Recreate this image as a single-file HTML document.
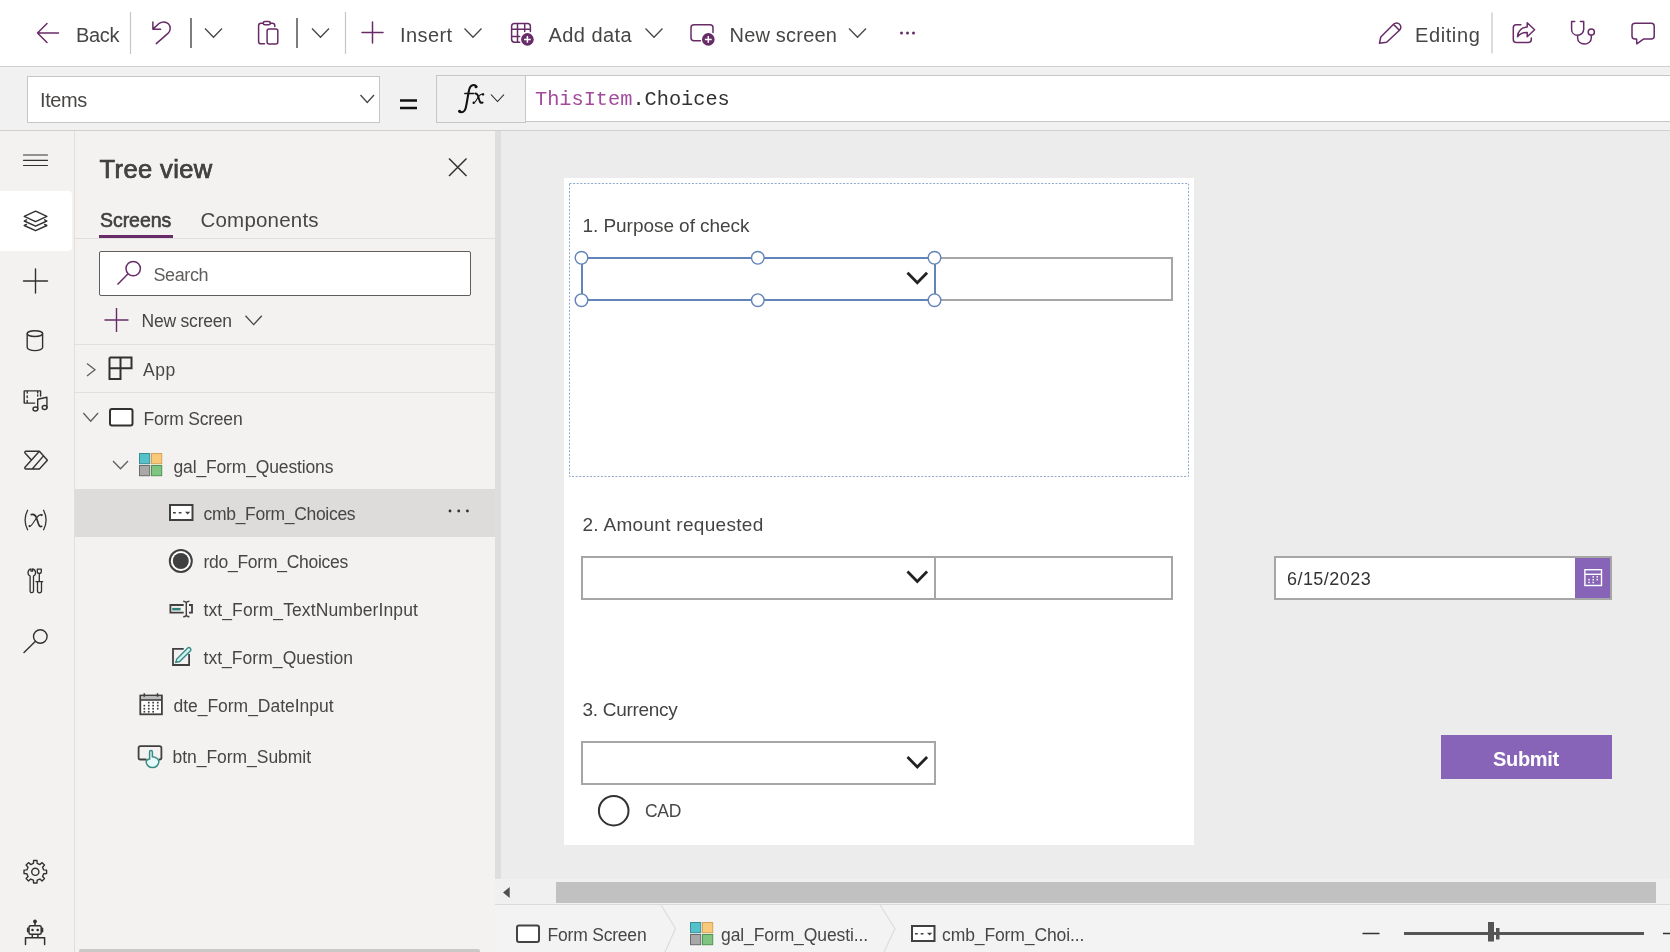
<!DOCTYPE html>
<html><head><meta charset="utf-8">
<style>
*{box-sizing:border-box;margin:0;padding:0}
html,body{width:1670px;height:952px;overflow:hidden;background:#fff;font-family:"Liberation Sans",sans-serif;color:#323130}
.a{position:absolute}
svg.full{position:absolute;left:0;top:0;will-change:transform}
text{white-space:pre}
</style></head><body>
<div class="a" style="left:0px;top:0px;width:1670px;height:66px;background:#fff"></div>
<div class="a" style="left:0px;top:66px;width:1670px;height:1px;background:#d2d0ce"></div>
<div class="a" style="left:0px;top:67px;width:1670px;height:63px;background:#f1f1f1"></div>
<div class="a" style="left:0px;top:130px;width:1670px;height:1px;background:#d2d0ce"></div>
<div class="a" style="left:0px;top:131px;width:74px;height:821px;background:#f3f2f1"></div>
<div class="a" style="left:74px;top:131px;width:1px;height:821px;background:#e1dfdd"></div>
<div class="a" style="left:75px;top:131px;width:420px;height:821px;background:#f3f2f1"></div>
<div class="a" style="left:495px;top:131px;width:6px;height:749px;background:#dedede"></div>
<div class="a" style="left:501px;top:131px;width:1169px;height:748px;background:#ececec"></div>
<div class="a" style="left:564px;top:178px;width:630px;height:667px;background:#fff"></div>
<div class="a" style="left:495px;top:879px;width:1175px;height:25px;background:#f0f0f0"></div>
<div class="a" style="left:495px;top:904px;width:1175px;height:1px;background:#dadada"></div>
<div class="a" style="left:495px;top:905px;width:1175px;height:47px;background:#f3f3f3"></div>
<div class="a" style="left:27px;top:76px;width:353px;height:47px;background:#fff;border:1px solid #c8c6c4"></div>
<div class="a" style="left:436px;top:75px;width:90px;height:48px;background:#f1f1f1;border:1px solid #c8c6c4"></div>
<div class="a" style="left:525px;top:75px;width:1145px;height:47px;background:#fff;border:1px solid #c8c6c4;border-right:none"></div>
<div class="a" style="left:0px;top:191px;width:72px;height:60px;background:#fff;border-radius:0 4px 4px 0"></div>
<div class="a" style="left:99px;top:251px;width:372px;height:45px;background:#fff;border:1px solid #605e5c;border-radius:2px"></div>
<div class="a" style="left:99px;top:235px;width:74px;height:3px;background:#672b67"></div>
<div class="a" style="left:75px;top:238px;width:420px;height:1px;background:#e1dfdd"></div>
<div class="a" style="left:75px;top:344px;width:420px;height:1px;background:#e1dfdd"></div>
<div class="a" style="left:75px;top:392px;width:420px;height:1px;background:#e1dfdd"></div>
<div class="a" style="left:75px;top:489px;width:420px;height:48px;background:#dddcdb"></div>
<div class="a" style="left:79px;top:949px;width:401px;height:3px;background:#c8c8c8;border-radius:2px 2px 0 0"></div>
<div class="a" style="left:581px;top:257px;width:355px;height:44px;background:#fff;border:2px solid #6284b8"></div>
<div class="a" style="left:936px;top:257px;width:237px;height:44px;background:#fff;border:2px solid #a6a6a6;border-left:none"></div>
<div class="a" style="left:581px;top:556px;width:355px;height:44px;background:#fff;border:2px solid #a6a6a6"></div>
<div class="a" style="left:934px;top:556px;width:239px;height:44px;background:#fff;border:2px solid #a6a6a6"></div>
<div class="a" style="left:581px;top:741px;width:355px;height:44px;background:#fff;border:2px solid #a6a6a6"></div>
<div class="a" style="left:1274px;top:556px;width:338px;height:44px;background:#fff;border:2px solid #a6a6a6"></div>
<div class="a" style="left:1575px;top:558px;width:35px;height:40px;background:#8764b8"></div>
<div class="a" style="left:1441px;top:735px;width:171px;height:44px;background:#8764b8"></div>
<div class="a" style="left:556px;top:882px;width:1100px;height:21px;background:#c1c1c1"></div>
<svg class="full" width="1670" height="952" viewBox="0 0 1670 952">
<g stroke="#672b67" stroke-width="1.5" fill="none" stroke-linecap="round" stroke-linejoin="round">
<path d="M58.5 33H37.5M47 23.5L37.5 33l9.5 9.5"/>
<path d="M152.9 22v7.2h7.7M153.2 28.9L159.3 23.3C160.6 22.3 162 21.9 163.6 21.9C167.5 21.9 170.2 24.8 170.2 28.4C170.2 30.4 169.5 31.9 168.2 33.1L156.3 43.6"/>
<path d="M264.5 43.8H261C259.6 43.8 258.6 42.8 258.6 41.4V25.7C258.6 24.3 259.6 23.3 261 23.3H263.3M270.3 23.3H272.4C273.8 23.3 274.8 24.3 274.8 25.7V26.5"/>
<rect x="263.3" y="21.6" width="7" height="3.2" rx="1.5"/>
<rect x="267.1" y="28.9" width="10.7" height="15" rx="2"/>
<path d="M372.5 22v21M362 32.5h21"/>
<path d="M519.7 42.2H514.5C512.8 42.2 511.6 41 511.6 39.3V26.4C511.6 24.7 512.8 23.5 514.5 23.5H527.5C529.2 23.5 530.4 24.7 530.4 26.4V31.5M511.6 29.3H530.4M511.6 36.5H519.7M517.5 23.5V42.2M524.7 23.5V31.5"/>
<path d="M700.4 40.7H694C692.3 40.7 691 39.4 691 37.7V27.7C691 26 692.3 24.7 694 24.7H710C711.7 24.7 713 26 713 27.7V32.6"/>
<path d="M1379.5 43.2L1380.8 37L1393.5 24.3C1395.3 22.5 1398 22.5 1399.6 24.2C1401.3 25.9 1401.2 28.5 1399.5 30.2L1386.6 42.3ZM1393.5 24.4L1398.6 29.5"/>
<path d="M1520.8 24.7H1516.3C1514.6 24.7 1513.3 26 1513.3 27.7V39.4C1513.3 41.1 1514.6 42.4 1516.3 42.4H1528.3C1530 42.4 1531.3 41.1 1531.3 39.4V38"/>
<path d="M1517.5 36.7C1518 31 1521 27.3 1527.2 27.1V22.7L1534.6 29.7L1527.2 36.7V32.5C1523 32.3 1520 33.8 1517.5 36.7Z"/>
<path d="M1574.7 21.4H1571.6V29.2C1571.6 32.7 1574.2 35.2 1577.6 35.2C1581 35.2 1583.7 32.7 1583.7 29.2V21.4H1580.4M1577.6 35.2V37.8C1577.6 41.5 1580.5 44 1584.4 44C1588.3 44 1591.3 41.5 1591.3 37.8V35.2"/>
<circle cx="1591.3" cy="32.1" r="3.1"/>
<path d="M1636.6 38.9H1635C1633.3 38.9 1632 37.6 1632 35.9V26.3C1632 24.6 1633.3 23.3 1635 23.3H1651.2C1652.9 23.3 1654.2 24.6 1654.2 26.3V35.9C1654.2 37.6 1652.9 38.9 1651.2 38.9H1643.8L1636.8 43.8Z"/>
</g>
<circle cx="527.4" cy="39.4" r="6.3" fill="#672b67"/><path d="M527.4 36v6.8M524 39.4h6.8" stroke="#fff" stroke-width="1.5"/>
<circle cx="708.3" cy="39.4" r="6.3" fill="#672b67"/><path d="M708.3 36v6.8M704.9 39.4h6.8" stroke="#fff" stroke-width="1.5"/>
<circle cx="901.5" cy="33" r="1.5" fill="#672b67"/>
<circle cx="907.5" cy="33" r="1.5" fill="#672b67"/>
<circle cx="913.5" cy="33" r="1.5" fill="#672b67"/>
<path d="M130.5 12V54M345.5 12V54M1492 12.5V53.5" stroke="#c8c6c4" stroke-width="1.2"/>
<path d="M191 18V48M297 18V48" stroke="#605e5c" stroke-width="1.6"/>
<path d="M205 28.5L213.5 37.3L222 28.5" stroke="#484644" stroke-width="1.3" fill="none"/>
<path d="M312 28.5L320.5 37.3L329 28.5" stroke="#484644" stroke-width="1.3" fill="none"/>
<path d="M464.5 28.5L473.0 37.3L481.5 28.5" stroke="#484644" stroke-width="1.3" fill="none"/>
<path d="M645.5 28.5L654.0 37.3L662.5 28.5" stroke="#484644" stroke-width="1.3" fill="none"/>
<path d="M849 28.5L857.5 37.3L866 28.5" stroke="#484644" stroke-width="1.3" fill="none"/>
<text x="76" y="42" font-size="20" fill="#474645" font-weight="400" font-family="Liberation Sans" letter-spacing="-0.3" >Back</text>
<text x="400" y="42" font-size="20" fill="#474645" font-weight="400" font-family="Liberation Sans" letter-spacing="0.4" >Insert</text>
<text x="548.5" y="42" font-size="20" fill="#474645" font-weight="400" font-family="Liberation Sans" letter-spacing="0.45" >Add data</text>
<text x="729.5" y="42" font-size="20" fill="#474645" font-weight="400" font-family="Liberation Sans" letter-spacing="0.2" >New screen</text>
<text x="1415" y="42" font-size="20" fill="#474645" font-weight="400" font-family="Liberation Sans" letter-spacing="0.6" >Editing</text>
<text x="40" y="107" font-size="20" fill="#484644" font-weight="400" font-family="Liberation Sans" letter-spacing="-0.4" >Items</text>
<path d="M360.5 95L367.25 102.5L374.0 95" stroke="#484644" stroke-width="1.3" fill="none"/>
<path d="M400 100.5h17M400 108h17" stroke="#111" stroke-width="2.4"/>
<g fill="none" stroke="#111" stroke-linecap="round"><path d="M476.3 86.7C475.6 85.3 474 84.8 472.6 85.2C470.4 85.8 469.3 88 468.8 91.2L466.4 104.8C465.7 109.4 463.9 112.3 461.4 112.3C460.3 112.3 459.6 111.9 459.3 111.3" stroke-width="2.1"/><path d="M464.8 93.6H473.6" stroke-width="1.5"/><path d="M475.4 93.5C476.8 93.5 477.6 94.5 478.2 96.5L479.8 101.5C480.3 102.6 481.2 103.2 482.6 102.6" stroke-width="1.9"/><path d="M483.2 94.1C481.5 93.5 480 94.5 478.3 97L475.5 101.5C474.8 102.6 474.1 103.1 473.4 103" stroke-width="1.1"/></g><circle cx="476" cy="86.8" r="1.5" fill="#111"/><circle cx="459.7" cy="111.2" r="1.5" fill="#111"/><circle cx="483" cy="94.4" r="1.2" fill="#111"/><circle cx="473.7" cy="102.8" r="1.2" fill="#111"/>
<path d="M491 94.5L497.5 101.5L504 94.5" stroke="#222" stroke-width="1.1" fill="none"/>
<text x="535" y="105" font-size="20.3" font-family="Liberation Mono"><tspan fill="#a24a9c">ThisItem</tspan><tspan fill="#323130">.Choices</tspan></text>
<g stroke="#323130" stroke-width="1.4" fill="none" stroke-linecap="round" stroke-linejoin="round">
<path d="M23.5 155h24M23.5 160.3h24M23.5 165.5h24" stroke-width="1.2"/>
<path d="M35.6 211.1L46.9 216.4L35.6 221.6L24.2 216.4Z"/>
<path d="M26.5 219.8L24.2 221L35.6 226.2L46.9 221L44.6 219.8M26.5 224.4L24.2 225.5L35.6 230.7L46.9 225.5L44.6 224.4"/>
<path d="M35.5 269v24M23.5 281h24"/>
<ellipse cx="34.9" cy="333.6" rx="7.7" ry="2.9"/><path d="M27.2 333.6V347.5C27.2 349.2 30.6 350.6 34.9 350.6C39.2 350.6 42.6 349.2 42.6 347.5V333.6"/>
<path d="M40.6 396V390.9H24.2V403.1H34.7M27.2 391.5v1.5M27.2 396v1.5M27.2 400.5v1.5M37.7 391.5v1.5M37.7 395v1"/>
<path d="M37.7 409V399.3L46.9 397.2V407.7"/><ellipse cx="35.4" cy="409" rx="2.4" ry="2"/><ellipse cx="44.6" cy="407.5" rx="2.4" ry="2"/>
<path d="M25.9 451.3H39.4L47.4 460.2L39.4 469H25.9C25 469 24.4 468 25 467.3L39.4 451.3M25.9 451.3C25 451.3 24.5 452.3 25 453L31.4 460M32.2 469L42.9 456.6"/>
<path d="M30.1 576V591A1.7 1.7 0 0 0 33.5 591V576A3.8 3.8 0 0 0 32.6 568.9V571.2H31V568.9A3.8 3.8 0 0 0 30.1 576Z" stroke-width="1.3"/>
<path d="M37.3 569.2H41.3V571.5C41.3 572.8 40.4 573.5 39.3 573.5C38.2 573.5 37.3 572.8 37.3 571.5ZM39.3 573.5V581.6M36 581.6H42.7M37.5 581.6V591C37.5 592 38.3 592.8 39.5 592.8C40.7 592.8 41.5 592 41.5 591V581.6" stroke-width="1.3"/>
<circle cx="40.3" cy="636.5" r="6.8"/><path d="M35.5 641.3L24 652.5"/>
<path d="M43.69 869.92 L46.57 870.10 L46.57 873.50 L43.69 873.68 L42.56 876.41 L44.48 878.57 L42.07 880.98 L39.91 879.06 L37.18 880.19 L37.00 883.07 L33.60 883.07 L33.42 880.19 L30.69 879.06 L28.53 880.98 L26.12 878.57 L28.04 876.41 L26.91 873.68 L24.03 873.50 L24.03 870.10 L26.91 869.92 L28.04 867.19 L26.12 865.03 L28.53 862.62 L30.69 864.54 L33.42 863.41 L33.60 860.53 L37.00 860.53 L37.18 863.41 L39.91 864.54 L42.07 862.62 L44.48 865.03 L42.56 867.19Z" stroke-width="1.4"/>
<circle cx="35.3" cy="871.8" r="3.6"/>
<path d="M35 921.8V925.5M30.5 925.8H39.7C40.5 925.8 41.2 926.5 41.2 927.3V932.8C41.2 933.6 40.5 934.3 39.7 934.3H30.5C29.7 934.3 29 933.6 29 932.8V927.3C29 926.5 29.7 925.8 30.5 925.8ZM32.3 934.3V937.5M37.9 934.3V937.5M25.5 944.5V937.7H44.6V944.5" stroke-width="1.5"/>
<circle cx="35" cy="921.5" r="1.2" fill="#323130"/><path d="M27.8 928.5v3M42.4 928.5v3" stroke-width="1.8"/>
<circle cx="32.5" cy="930" r=".6" fill="#323130"/><circle cx="37.7" cy="930" r=".6" fill="#323130"/>
</g>
<g fill="none" stroke="#323130" stroke-linecap="round"><path d="M27.6 510.3Q22.6 520 27.6 529.7M43.6 510.3Q48.6 520 43.6 529.7" stroke-width="1.3"/><path d="M31.3 514.6C33.5 514 35.3 514.6 36.3 517.5L38.6 524.2C39.3 526.2 40.3 527.1 41.7 526.3" stroke-width="1.7"/><path d="M41.8 514.8C40.2 514.1 38.6 515 36.8 517.6L32.6 523.8C31.3 525.8 30.4 526.7 29.4 526.4" stroke-width="1.1"/></g><circle cx="41.6" cy="515.1" r="1.1" fill="#323130"/><circle cx="29.6" cy="526.1" r="1.1" fill="#323130"/>
<text x="99.5" y="178" font-size="25.5" fill="#474645" font-weight="400" font-family="Liberation Sans" letter-spacing="0.4" stroke="#323130" stroke-width="0.7">Tree view</text>
<path d="M449 158.5l17.5 17.5M466.5 158.5L449 176" stroke="#323130" stroke-width="1.5"/>
<text x="100" y="227" font-size="19.5" fill="#474645" font-weight="400" font-family="Liberation Sans" letter-spacing="-0.05" stroke="#323130" stroke-width="0.55">Screens</text>
<text x="200.5" y="227" font-size="20.5" fill="#474645" font-weight="400" font-family="Liberation Sans" letter-spacing="0.2" >Components</text>
<g stroke="#672b67" stroke-width="1.5" fill="none"><circle cx="133.2" cy="268.6" r="7.2"/><path d="M128.1 273.7L117.5 284.5"/></g>
<text x="153.5" y="280.5" font-size="18" fill="#605e5c" font-weight="400" font-family="Liberation Sans" letter-spacing="-0.4" >Search</text>
<path d="M116.5 308v24M104.5 320h24" stroke="#672b67" stroke-width="1.4"/>
<text x="141.5" y="327" font-size="17.5" fill="#474645" font-weight="400" font-family="Liberation Sans" letter-spacing="-0.2" >New screen</text>
<path d="M245.5 315.8L253.65 324.6L261.8 315.8" stroke="#484644" stroke-width="1.3" fill="none"/>
<path d="M87 363.5L95 369.8L87 376" stroke="#605e5c" stroke-width="1.3" fill="none"/>
<path d="M83.3 413L90.7 421.3L98.1 413" stroke="#605e5c" stroke-width="1.3" fill="none"/>
<path d="M113 461L120.5 468.8L128 461" stroke="#605e5c" stroke-width="1.3" fill="none"/>
<g stroke="#323130" stroke-width="2" fill="none"><path d="M109.5 357.5H131.5V368.2H120.5M109.5 357.5V379H120.5V357.5M109.5 368.2H120.5"/></g>
<text x="143" y="376" font-size="17.5" fill="#474645" font-weight="400" font-family="Liberation Sans" letter-spacing="0.6" >App</text>
<rect x="110" y="409" width="22.5" height="16.5" rx="2" fill="#fff" stroke="#323130" stroke-width="2"/>
<text x="143.5" y="424.5" font-size="17.5" fill="#474645" font-weight="400" font-family="Liberation Sans" letter-spacing="-0.2" >Form Screen</text>
<rect x="139.5" y="453.5" width="10.2" height="10.2" fill="#55c1cb" stroke="#3c8c93" stroke-width="1"/>
<rect x="151.5" y="453.5" width="10.2" height="10.2" fill="#f9c97b" stroke="#d7a257" stroke-width="1"/>
<rect x="139.5" y="465.5" width="10.2" height="10.2" fill="#a8a8a8" stroke="#6b6b6b" stroke-width="1"/>
<rect x="151.5" y="465.5" width="10.2" height="10.2" fill="#80c482" stroke="#4f9652" stroke-width="1"/>
<text x="173.5" y="472.5" font-size="17.5" fill="#474645" font-weight="400" font-family="Liberation Sans" letter-spacing="-0.15" >gal_Form_Questions</text>
<rect x="170" y="505" width="22.5" height="15" fill="#fff" stroke="#404040" stroke-width="2"/>
<path d="M173 512.7h2.8M178.7 512.7h2.8" stroke="#404040" stroke-width="1.6"/>
<path d="M185 511.8h5.3l-2.65 2.7z" fill="#404040"/>
<text x="203.5" y="519.5" font-size="17.5" fill="#474645" font-weight="400" font-family="Liberation Sans" letter-spacing="-0.3" >cmb_Form_Choices</text>
<circle cx="450" cy="511" r="1.4" fill="#323130"/>
<circle cx="458.7" cy="511" r="1.4" fill="#323130"/>
<circle cx="467.4" cy="511" r="1.4" fill="#323130"/>
<circle cx="180.8" cy="561" r="11" fill="#fff" stroke="#404040" stroke-width="2"/><circle cx="180.8" cy="561" r="8" fill="#404040"/>
<text x="203.5" y="568" font-size="17.5" fill="#474645" font-weight="400" font-family="Liberation Sans" letter-spacing="-0.27" >rdo_Form_Choices</text>
<g stroke="#404040" stroke-width="1.8" fill="none"><path d="M183.7 605H170.4V612.7H183.7M189 605H192V612.7H189"/><path d="M186.3 601.5V616.5M183.2 601.2C184.5 601.2 185.6 601.7 186.3 602.5C187 601.7 188.1 601.2 189.4 601.2M183.2 616.8C184.5 616.8 185.6 616.3 186.3 615.5C187 616.3 188.1 616.8 189.4 616.8" stroke-width="1.4"/></g>
<rect x="172.2" y="607.9" width="8.4" height="2.5" fill="#2f7f7a"/>
<text x="203.5" y="616" font-size="17.5" fill="#474645" font-weight="400" font-family="Liberation Sans" letter-spacing="0.1" >txt_Form_TextNumberInput</text>
<path d="M183.7 648.8H173V665H189.1V654" stroke="#404040" stroke-width="1.8" fill="none"/>
<path d="M175.8 662.3L176.8 659L187.5 648.3C188.3 647.5 189.5 647.5 190.3 648.3C191.1 649.1 191.1 650.3 190.3 651.1L179.6 661.5Z" fill="#cff5f5" stroke="#3b8a85" stroke-width="1.4"/>
<text x="203.5" y="663.5" font-size="17.5" fill="#474645" font-weight="400" font-family="Liberation Sans" letter-spacing="0.04" >txt_Form_Question</text>
<rect x="140.3" y="695.5" width="21.6" height="18.8" fill="#fff" stroke="#404040" stroke-width="1.8"/>
<rect x="141.2" y="696.3" width="19.8" height="3.6" fill="#bdbdbd"/><path d="M140.3 700h21.6" stroke="#404040" stroke-width="1.6"/>
<path d="M144.3 693.2v3.6M157.5 693.2v3.6" stroke="#404040" stroke-width="1.6"/>
<rect x="147.89999999999998" y="701.8000000000001" width="1.7" height="1.7" fill="#404040"/>
<rect x="152.29999999999998" y="701.8000000000001" width="1.7" height="1.7" fill="#404040"/>
<rect x="156.89999999999998" y="701.8000000000001" width="1.7" height="1.7" fill="#404040"/>
<rect x="143.5" y="704.8000000000001" width="1.7" height="1.7" fill="#404040"/>
<rect x="147.89999999999998" y="704.8000000000001" width="1.7" height="1.7" fill="#404040"/>
<rect x="152.29999999999998" y="704.8000000000001" width="1.7" height="1.7" fill="#404040"/>
<rect x="156.89999999999998" y="704.8000000000001" width="1.7" height="1.7" fill="#404040"/>
<rect x="143.5" y="707.9000000000001" width="1.7" height="1.7" fill="#404040"/>
<rect x="147.89999999999998" y="707.9000000000001" width="1.7" height="1.7" fill="#404040"/>
<rect x="152.29999999999998" y="707.9000000000001" width="1.7" height="1.7" fill="#404040"/>
<rect x="156.89999999999998" y="707.9000000000001" width="1.7" height="1.7" fill="#404040"/>
<rect x="143.5" y="710.9000000000001" width="1.7" height="1.7" fill="#404040"/>
<rect x="147.89999999999998" y="710.9000000000001" width="1.7" height="1.7" fill="#404040"/>
<rect x="152.29999999999998" y="710.9000000000001" width="1.7" height="1.7" fill="#404040"/>
<text x="173.5" y="712" font-size="17.5" fill="#474645" font-weight="400" font-family="Liberation Sans" letter-spacing="-0.03" >dte_Form_DateInput</text>
<path d="M146.5 759.5H140.4C139.3 759.5 138.6 758.8 138.6 757.7V747.9C138.6 746.8 139.3 746.1 140.4 746.1H159.6C160.7 746.1 161.4 746.8 161.4 747.9V757.7C161.4 758.8 160.7 759.5 159.6 759.5H159" stroke="#404040" stroke-width="1.8" fill="none"/>
<path d="M149.6 759V752C149.6 751 150.3 750.4 151 750.4C151.7 750.4 152.4 751 152.4 752V756.8C155.5 757.3 158.8 758 158.8 761.5C158.8 765 156 767.6 152.5 767.6C149 767.6 146.2 765 146.2 761.8C146.2 760.3 147 759.3 149.6 759Z" fill="#e6fbfb" stroke="#3b8a85" stroke-width="1.5"/>
<text x="172.5" y="762.5" font-size="17.5" fill="#474645" font-weight="400" font-family="Liberation Sans" letter-spacing="-0.04" >btn_Form_Submit</text>
<text x="582.5" y="232.4" font-size="19" fill="#454443" font-weight="400" font-family="Liberation Sans" letter-spacing="-0.05" >1. Purpose of check</text>
<text x="582.5" y="531.4" font-size="19" fill="#454443" font-weight="400" font-family="Liberation Sans" letter-spacing="0.3" >2. Amount requested</text>
<text x="582.5" y="715.8" font-size="19" fill="#454443" font-weight="400" font-family="Liberation Sans" letter-spacing="-0.3" >3. Currency</text>
<path d="M907.5 272.8L917.3 282.8L927.1 272.8" stroke="#222" stroke-width="2.8" fill="none"/>
<path d="M907.5 571.5L917.3 581.5L927.1 571.5" stroke="#222" stroke-width="2.8" fill="none"/>
<path d="M907.5 757L917.3 767L927.1 757" stroke="#222" stroke-width="2.8" fill="none"/>
<rect x="569.5" y="183.5" width="619" height="293" fill="none" stroke="#8ea9cc" stroke-width="1" stroke-dasharray="2 1.6"/>
<circle cx="581.5" cy="257.8" r="6.3" fill="#fff" stroke="#6284b8" stroke-width="1.4"/>
<circle cx="581.5" cy="300.2" r="6.3" fill="#fff" stroke="#6284b8" stroke-width="1.4"/>
<circle cx="757.8" cy="257.8" r="6.3" fill="#fff" stroke="#6284b8" stroke-width="1.4"/>
<circle cx="757.8" cy="300.2" r="6.3" fill="#fff" stroke="#6284b8" stroke-width="1.4"/>
<circle cx="934.5" cy="257.8" r="6.3" fill="#fff" stroke="#6284b8" stroke-width="1.4"/>
<circle cx="934.5" cy="300.2" r="6.3" fill="#fff" stroke="#6284b8" stroke-width="1.4"/>
<circle cx="613.7" cy="810.7" r="14.8" fill="#fff" stroke="#333" stroke-width="2"/>
<text x="645" y="816.5" font-size="17.5" fill="#484848" font-weight="400" font-family="Liberation Sans" letter-spacing="-0.3" >CAD</text>
<text x="1287" y="585" font-size="18" fill="#333" font-weight="400" font-family="Liberation Sans" letter-spacing="0.45" >6/15/2023</text>
<g stroke="#fff" fill="none" stroke-width="1.4"><rect x="1584.9" y="569.7" width="16.6" height="15.8"/><path d="M1584.9 574.3h16.6"/></g>
<rect x="1592.5" y="576.0999999999999" width="1.5" height="1.5" fill="#fff"/>
<rect x="1596.5" y="576.0999999999999" width="1.5" height="1.5" fill="#fff"/>
<rect x="1588.3" y="578.9" width="1.5" height="1.5" fill="#fff"/>
<rect x="1592.5" y="578.9" width="1.5" height="1.5" fill="#fff"/>
<rect x="1596.5" y="578.9" width="1.5" height="1.5" fill="#fff"/>
<rect x="1588.3" y="581.6999999999999" width="1.5" height="1.5" fill="#fff"/>
<rect x="1592.5" y="581.6999999999999" width="1.5" height="1.5" fill="#fff"/>
<text x="1493" y="766" font-size="20" fill="#fff" font-weight="700" font-family="Liberation Sans" letter-spacing="-0.3" >Submit</text>
<path d="M503 892.5L509.7 887V898Z" fill="#505050"/>
<rect x="517" y="925.5" width="22" height="16.5" rx="2" fill="#fff" stroke="#444" stroke-width="2"/>
<text x="547.5" y="941" font-size="17.5" fill="#474645" font-weight="400" font-family="Liberation Sans" letter-spacing="-0.2" >Form Screen</text>
<path d="M661 905L675.5 928.5L665 952M880 905L895 928.5L884 952" stroke="#dcdcdc" stroke-width="1.2" fill="none"/>
<rect x="690.5" y="922.5" width="10.2" height="10.2" fill="#55c1cb" stroke="#3c8c93" stroke-width="1"/>
<rect x="702.5" y="922.5" width="10.2" height="10.2" fill="#f9c97b" stroke="#d7a257" stroke-width="1"/>
<rect x="690.5" y="934.5" width="10.2" height="10.2" fill="#a8a8a8" stroke="#6b6b6b" stroke-width="1"/>
<rect x="702.5" y="934.5" width="10.2" height="10.2" fill="#80c482" stroke="#4f9652" stroke-width="1"/>
<text x="721" y="941" font-size="17.5" fill="#474645" font-weight="400" font-family="Liberation Sans" letter-spacing="-0.1" >gal_Form_Questi...</text>
<rect x="912" y="926" width="22.5" height="15" fill="#fff" stroke="#404040" stroke-width="2"/>
<path d="M915 933.7h2.8M920.7 933.7h2.8" stroke="#404040" stroke-width="1.6"/>
<path d="M927 932.8h5.3l-2.65 2.7z" fill="#404040"/>
<text x="942" y="941" font-size="17.5" fill="#474645" font-weight="400" font-family="Liberation Sans" letter-spacing="-0.1" >cmb_Form_Choi...</text>
<path d="M1362.5 933.5h17M1663 933.5h7" stroke="#333" stroke-width="1.6"/>
<path d="M1404 933.5H1644" stroke="#555" stroke-width="2.8"/>
<rect x="1488" y="922" width="6" height="19.5" fill="#555"/><rect x="1496" y="928" width="3.5" height="11.5" fill="#555"/>
</svg>
</body></html>
